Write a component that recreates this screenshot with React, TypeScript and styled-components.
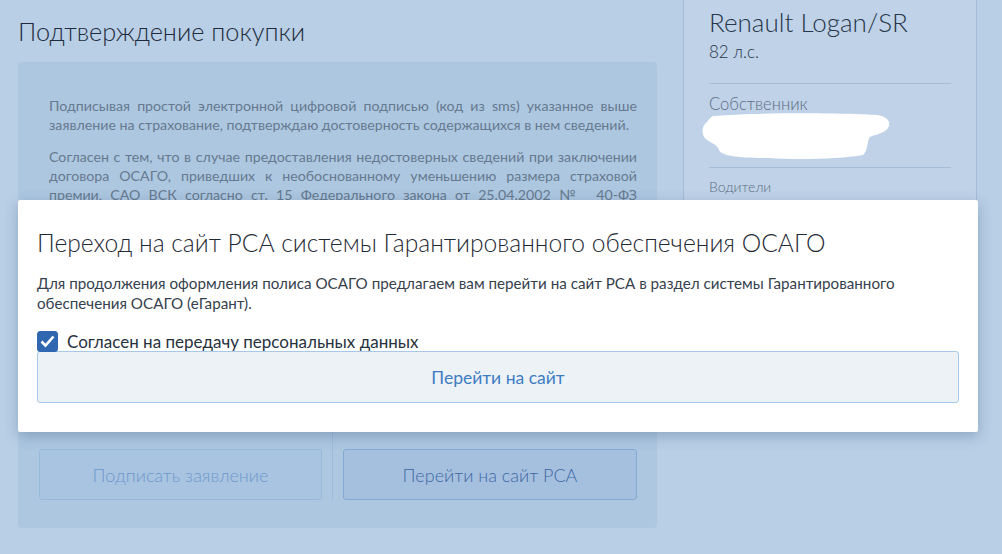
import { useState } from "react";
import styled, { createGlobalStyle } from "styled-components";

const GlobalStyle = createGlobalStyle`
  html, body {
    margin: 0;
    padding: 0;
    background: #b9cfe6;
    font-family: Lato, "Open Sans", sans-serif;
    overflow: hidden;
  }
  * { box-sizing: border-box; }
`;

const Page = styled.div`
  position: relative;
  width: 1002px;
  height: 554px;
  display: flex;
  gap: 26px;
  padding: 0 18px;
`;

const Main = styled.div`
  width: 639px;
  display: flex;
  flex-direction: column;
`;

const PageTitle = styled.h1`
  margin: 15px 0 0;
  font-size: 25.3px;
  line-height: 32px;
  font-weight: 300;
  color: #1d2b3c;
`;

const Card = styled.div`
  margin-top: 15px;
  background: #adc7e1;
  border-radius: 4px;
  padding: 34px 20px 28px 21px;
  display: flex;
  flex-direction: column;
`;

const Terms = styled.div`
  height: 336px;
  flex-shrink: 0;
  overflow: hidden;
  padding: 0 0 0 10px;
`;

const Para = styled.p`
  margin: 0 0 13px;
  font-size: 14.2px;
  line-height: 19px;
  color: #66798e;
  text-align: justify;
`;

const Actions = styled.div`
  display: grid;
  grid-template-columns: 283px 1px 294px;
  column-gap: 10px;
`;

const Divider = styled.div`
  background: #9fbcdb;
`;

const ActionButton = styled.button<{ $primary?: boolean }>`
  margin-top: 17px;
  height: 51px;
  border-radius: 3px;
  border: 1px solid ${(p) => (p.$primary ? "#85a9d5" : "#98b8dc")};
  background: ${(p) => (p.$primary ? "#a5c0df" : "#a9c4e1")};
  color: ${(p) => (p.$primary ? "#3d68a3" : "#6d98cc")};
  font-family: Lato, sans-serif;
  font-size: 18px;
  font-weight: 300;
`;

const Aside = styled.aside`
  width: 294px;
  height: 420px;
  background: #bfd2e8;
  border-left: 1px solid #a3bcd8;
  border-right: 1px solid #a3bcd8;
  padding: 7px 25px 0 25px;
`;

const CarName = styled.div`
  font-size: 26px;
  line-height: 30px;
  font-weight: 300;
  color: #273648;
`;

const Power = styled.div`
  margin-top: 4px;
  font-size: 17px;
  line-height: 22px;
  font-weight: 300;
  color: #273648;
`;

const Rule = styled.hr<{ $tight?: boolean }>`
  margin: ${(p) => (p.$tight ? "5px" : "20px")} 0 0;
  border: 0;
  border-top: 1px solid #a6bdd7;
`;

const Label = styled.div<{ $small?: boolean }>`
  margin-top: 9px;
  font-size: ${(p) => (p.$small ? "14px" : "16.6px")};
  line-height: ${(p) => (p.$small ? "20px" : "22px")};
  font-weight: 300;
  color: #5c6d81;
`;

const Redacted = styled.svg`
  display: block;
  margin: -3px 0 0 -10px;
`;

const Modal = styled.div`
  position: absolute;
  left: 18px;
  top: 200px;
  width: 960px;
  height: 232px;
  background: #fff;
  border-radius: 2px;
  box-shadow: 0 4px 14px rgba(40, 70, 110, 0.3);
  padding: 28px 19px 0 19px;
`;

const ModalTitle = styled.h2`
  margin: 0;
  font-size: 24.6px;
  line-height: 30px;
  font-weight: 300;
  color: #1f2a36;
`;

const ModalText = styled.p`
  margin: 15px 0 0;
  font-size: 15.2px;
  line-height: 20px;
  color: #36414d;
`;

const CheckRow = styled.label`
  margin-top: 18px;
  display: flex;
  align-items: center;
  gap: 9px;
  height: 20px;
  font-size: 17px;
  color: #28323d;
  cursor: pointer;
`;

const Box = styled.span<{ $on: boolean }>`
  width: 21px;
  height: 21px;
  border-radius: 3px;
  background: ${(p) => (p.$on ? "#2f68b1" : "#fff")};
  border: 1px solid #2f68b1;
  display: flex;
  align-items: center;
  justify-content: center;
`;

const GoButton = styled.button`
  display: block;
  width: 922px;
  height: 52px;
  border: 1px solid #a7c8e6;
  border-radius: 3px;
  background: #edf2f7;
  color: #3f7dc2;
  font-family: Lato, sans-serif;
  font-size: 17.5px;
`;

export default function App() {
  const [agree, setAgree] = useState(true);

  return (
    <>
      <GlobalStyle />
      <Page>
        <Main>
          <PageTitle>Подтверждение покупки</PageTitle>
          <Card>
            <Terms>
              <Para>
                Подписывая простой электронной цифровой подписью (код из sms) указанное выше
                заявление на страхование, подтверждаю достоверность содержащихся в нем сведений.
              </Para>
              <Para>
                Согласен с тем, что в случае предоставления недостоверных сведений при заключении
                договора ОСАГО, приведших к необоснованному уменьшению размера страховой
                премии, САО ВСК согласно ст. 15 Федерального закона от 25.04.2002 №&nbsp; 40-ФЗ
                «Об&nbsp;обязательном&nbsp;страховании гражданской ответственности владельцев
                транспортных средств» вправе предъявить ко мне регрессное требование в размере
                произведенной страховщиком страховой выплаты.
              </Para>
              <Para>
                Подтверждаю, что ознакомлен и согласен с правилами страхования и условиями
                договора, а также даю согласие на обработку персональных данных.
              </Para>
            </Terms>
            <Actions>
              <ActionButton disabled>Подписать заявление</ActionButton>
              <Divider />
              <ActionButton $primary>Перейти на сайт РСА</ActionButton>
            </Actions>
          </Card>
        </Main>
        <Aside>
          <CarName>Renault Logan/SR</CarName>
          <Power>82 л.с.</Power>
          <Rule />
          <Label>Собственник</Label>
          <Redacted width="200" height="50" viewBox="0 0 200 50">
            <path
              d="M14 4 C60 0 150 1 178 3 C192 5 193 14 186 19 C180 23 172 23 170 26 C168 33 168 40 164 43 C140 47 100 48 70 46 C40 46 22 44 20 38 C18 32 12 31 8 28 C2 24 2 14 8 10 C10 7 12 5 14 4 Z"
              fill="#ffffff"
            />
          </Redacted>
          <Rule $tight />
          <Label $small>Водители</Label>
        </Aside>
        <Modal>
          <ModalTitle>Переход на сайт РСА системы Гарантированного обеспечения ОСАГО</ModalTitle>
          <ModalText>
            Для продолжения оформления полиса ОСАГО предлагаем вам перейти на сайт РСА в раздел
            системы Гарантированного обеспечения ОСАГО (еГарант).
          </ModalText>
          <CheckRow onClick={() => setAgree(!agree)}>
            <Box $on={agree}>
              {agree && (
                <svg width="15" height="13" viewBox="0 0 15 13">
                  <path d="M1.5 6.5 L5.5 10.5 L13.5 1.5" stroke="#fff" strokeWidth="2.6" fill="none" />
                </svg>
              )}
            </Box>
            Согласен на передачу персональных данных
          </CheckRow>
          <GoButton>Перейти на сайт</GoButton>
        </Modal>
      </Page>
    </>
  );
}
